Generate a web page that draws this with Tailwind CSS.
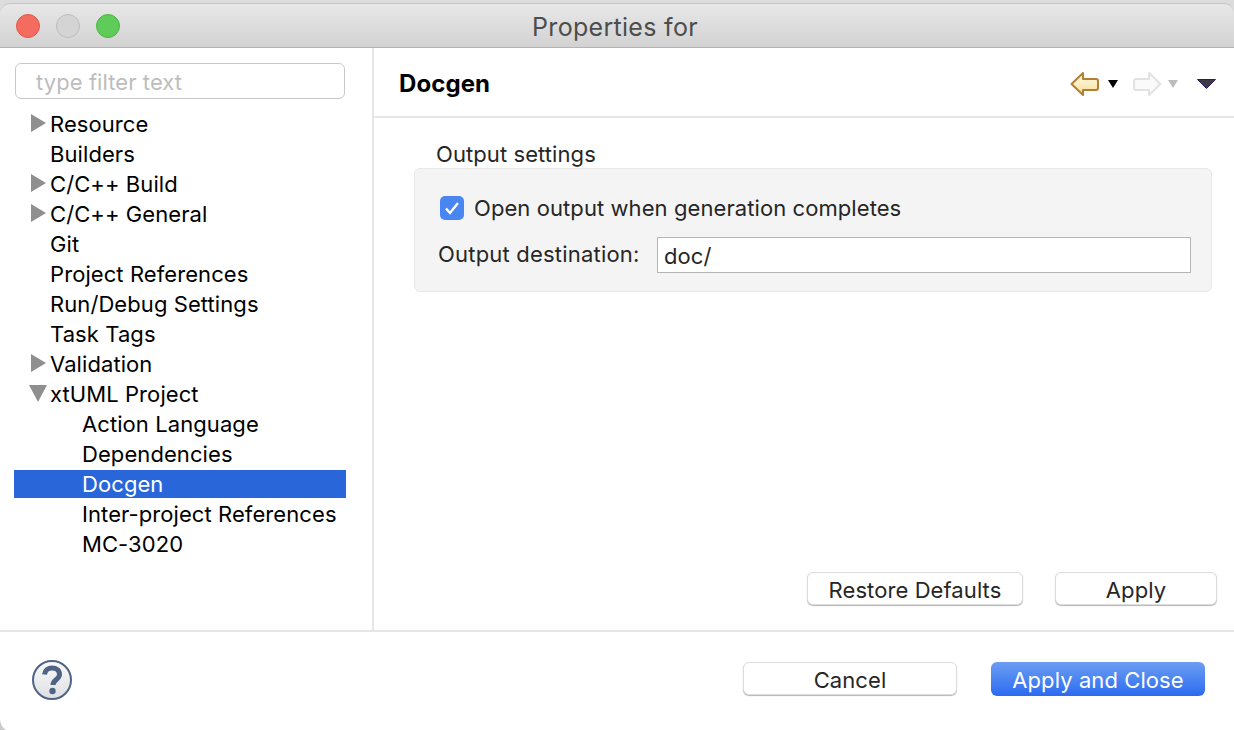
<!DOCTYPE html>
<html lang="en">
<head>
    <meta charset="UTF-8">
    <title>Properties for</title>
    <script src="https://cdn.jsdelivr.net/npm/@tailwindcss/browser@4"></script>
</head>
<body class="relative w-[1234px] h-[730px] overflow-hidden bg-white text-[22px] tracking-[0.08px] text-[#262626] font-['Inter','Liberation_Sans',sans-serif]">
    <div class="h-full flex flex-col pt-[3px] bg-[#dcdcdc]">
        <!-- title bar -->
        <div class="h-[45px] shrink-0 flex items-center relative rounded-t-[10px] border-t border-[#c4c4c4] border-b bg-gradient-to-b from-[#e8e8e8] to-[#d2d2d2] border-b-[#b4b4b4]">
            <div class="flex gap-4 pl-4">
                <span class="w-6 h-6 rounded-full bg-[#f46b5f] border border-[#e2574c]"></span>
                <span class="w-6 h-6 rounded-full bg-[#d4d4d4] border border-[#bdbdbd]"></span>
                <span class="w-6 h-6 rounded-full bg-[#5fcb58] border border-[#4fb548]"></span>
            </div>
            <div class="absolute inset-0 flex items-center justify-center pt-[3px] pr-[4px] text-[#4d4d4d] text-[25px] tracking-[0.3px] leading-none">Properties for</div>
        </div>

        <div class="flex-1 flex flex-col bg-white min-h-0">
            <div class="flex h-[582px] shrink-0">
                <!-- sidebar -->
                <div class="w-[374px] shrink-0 border-r-2 border-[#e6e6e6] pt-[15px] flex flex-col">
                    <div class="ml-[15px] w-[330px] h-9 border border-[#c8c8c8] rounded-md pl-5 pt-[1px] flex items-center text-[#bdbdbd] leading-none">type filter text</div>
                    <ul class="mt-[10px] ml-[14px] w-[332px] text-black">
                        <li class="h-[30px] flex items-center relative pl-[36px]"><svg class="absolute left-[17px] top-[5px]" width="15" height="18" viewBox="0 0 15 18"><path d="M0 0 L15 9 L0 18 Z" fill="#8f8f8f"/></svg>Resource</li>
                        <li class="h-[30px] flex items-center pl-[36px]">Builders</li>
                        <li class="h-[30px] flex items-center relative pl-[36px]"><svg class="absolute left-[17px] top-[5px]" width="15" height="18" viewBox="0 0 15 18"><path d="M0 0 L15 9 L0 18 Z" fill="#8f8f8f"/></svg>C/C++ Build</li>
                        <li class="h-[30px] flex items-center relative pl-[36px]"><svg class="absolute left-[17px] top-[5px]" width="15" height="18" viewBox="0 0 15 18"><path d="M0 0 L15 9 L0 18 Z" fill="#8f8f8f"/></svg>C/C++ General</li>
                        <li class="h-[30px] flex items-center pl-[36px]">Git</li>
                        <li class="h-[30px] flex items-center pl-[36px]">Project References</li>
                        <li class="h-[30px] flex items-center pl-[36px]">Run/Debug Settings</li>
                        <li class="h-[30px] flex items-center pl-[36px]">Task Tags</li>
                        <li class="h-[30px] flex items-center relative pl-[36px]"><svg class="absolute left-[17px] top-[5px]" width="15" height="18" viewBox="0 0 15 18"><path d="M0 0 L15 9 L0 18 Z" fill="#8f8f8f"/></svg>Validation</li>
                        <li class="h-[30px] flex items-center relative pl-[36px]"><svg class="absolute left-[15px] top-[6px]" width="18" height="17" viewBox="0 0 18 17"><path d="M0 0 L18 0 L9 17 Z" fill="#8f8f8f"/></svg>xtUML Project</li>
                        <li class="h-[30px] flex items-center pl-[68px]">Action Language</li>
                        <li class="h-[30px] flex items-center pl-[68px]">Dependencies</li>
                        <li class="h-[28px] my-[1px] flex items-center pl-[68px] bg-[#2966d9] text-white">Docgen</li>
                        <li class="h-[30px] flex items-center pl-[68px]">Inter-project References</li>
                        <li class="h-[30px] flex items-center pl-[68px]">MC-3020</li>
                    </ul>
                </div>

                <!-- main panel -->
                <div class="flex-1 flex flex-col min-w-0">
                    <div class="h-[70px] shrink-0 border-b-2 border-[#e6e6e6] flex items-center justify-between pl-[25px] pr-[18px]">
                        <span class="font-bold text-[24px] pt-[3px] text-black">Docgen</span>
                        <div class="flex items-center mt-1">
                            <svg width="30" height="26" viewBox="0 0 30 26">
                                <defs><linearGradient id="back" x1="0" y1="0" x2="0" y2="1"><stop offset="0" stop-color="#fffbe6"/><stop offset="1" stop-color="#f8df9a"/></linearGradient></defs>
                                <path d="M1.5 13 L13 2 L13 8 L26 8 Q28 8 28 10 L28 17 Q28 19 26 19 L13 19 L13 24 Z" fill="url(#back)" stroke="#b07f33" stroke-width="2" stroke-linejoin="round"/>
                            </svg>
                            <svg class="ml-[8px]" width="10" height="8" viewBox="0 0 10 8"><path d="M0 0 L10 0 L5 8 Z" fill="#000"/></svg>
                            <svg class="ml-[14px]" width="30" height="26" viewBox="0 0 30 26">
                                <path d="M28.5 13 L17 2 L17 8 L4 8 Q2 8 2 10 L2 17 Q2 19 4 19 L17 19 L17 24 Z" fill="#fafafa" stroke="#e2e2e2" stroke-width="2" stroke-linejoin="round"/>
                            </svg>
                            <svg class="ml-[6px]" width="10" height="8" viewBox="0 0 10 8"><path d="M0 0 L10 0 L5 8 Z" fill="#bdbdbd"/></svg>
                            <svg class="ml-[19px]" width="19" height="10" viewBox="0 0 19 10"><path d="M0.5 0.5 L18.5 0.5 L9.5 9.5 Z" fill="#3f3a45" stroke="#2a1a6e" stroke-width="1"/></svg>
                        </div>
                    </div>

                    <div class="flex-1 flex flex-col pl-10 pr-[22px]">
                        <div class="mt-[21px] ml-[22px] leading-[30px] h-[29px]">Output settings</div>
                        <div class="h-[124px] bg-[#f4f4f4] border border-[#e8e8e8] rounded-md pt-[24px] pl-[25px] pr-5">
                            <div class="flex items-center h-[30px]">
                                <span class="w-6 h-6 rounded-[5px] bg-[#4a86f2] flex items-center justify-center">
                                    <svg width="16" height="14" viewBox="0 0 16 14"><path d="M2 7.5 L6 12 L14 2" fill="none" stroke="#fff" stroke-width="2.4"/></svg>
                                </span>
                                <span class="ml-[10px]">Open output when generation completes</span>
                            </div>
                            <div class="flex items-center mt-[14px] -ml-[2px]">
                                <span class="w-[219px] pb-[2px] tracking-[0.2px]">Output destination:</span>
                                <div class="w-[534px] h-[36px] border border-[#b5b5b5] bg-white pl-[6px] pt-[2px] flex items-center">doc/</div>
                            </div>
                        </div>
                        <div class="mt-auto mb-[25px] flex justify-end gap-8 -mr-[5px]">
                            <button class="w-[216px] h-[33px] pt-[1px] bg-white rounded-md border border-[#dcdcdc] shadow-[0_1px_1px_#b5b5b5]">Restore Defaults</button>
                            <button class="w-[162px] h-[33px] pt-[1px] bg-white rounded-md border border-[#dcdcdc] shadow-[0_1px_1px_#b5b5b5]">Apply</button>
                        </div>
                    </div>
                </div>
            </div>

            <!-- footer -->
            <div class="flex-1 border-t-2 border-[#e6e6e6] flex items-center justify-between pl-[32px] pr-[29px]">
                <svg class="-mt-[3px]" width="40" height="40" viewBox="0 0 40 40">
                    <defs><linearGradient id="help" x1="0" y1="0" x2="0" y2="1"><stop offset="0" stop-color="#fafafa"/><stop offset="1" stop-color="#dedfe3"/></linearGradient></defs>
                    <circle cx="20" cy="20" r="19" fill="url(#help)" stroke="#4f6385" stroke-width="2"/>
                    <path d="M12.5 14.5 C13 10 16.5 8 20 8 C24.5 8 27.5 10.5 27.5 14.5 C27.5 19.5 21 19.5 21 25" fill="none" stroke="#4f6385" stroke-width="5"/>
                    <circle cx="20.5" cy="31" r="3.2" fill="#4f6385"/>
                </svg>
                <div class="flex gap-[34px] -mt-[4px]">
                    <button class="w-[214px] h-[33px] pt-[1px] bg-white rounded-md border border-[#dcdcdc] shadow-[0_1px_1px_#b5b5b5]">Cancel</button>
                    <button class="w-[214px] h-[34px] pt-[2px] rounded-md bg-gradient-to-b from-[#6d9df2] to-[#2a6af0] text-white">Apply and Close</button>
                </div>
            </div>
        </div>
    </div>
    <!-- window corner, bottom left -->
    <svg class="absolute left-0 bottom-0" width="6" height="10" viewBox="0 0 6 10"><path d="M0 0 Q1 7 6 10 L0 10 Z" fill="#c9c9c9"/></svg>
</body>
</html>
